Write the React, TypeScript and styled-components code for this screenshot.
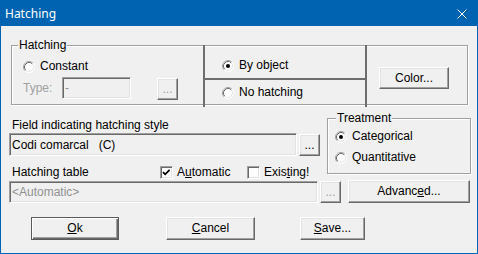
import React from "react";
import styled, { createGlobalStyle } from "styled-components";

const Global = createGlobalStyle`
  html, body { margin: 0; padding: 0; background: #f0f0f0; }
  body { font-family: "Liberation Sans", Arial, sans-serif; font-size: 12px; color: #000; }
  * { box-sizing: border-box; }
`;

const Window = styled.div`
  width: 478px;
  height: 254px;
  border: 1px solid #0063b1;
  background: #f0f0f0;
  display: flex;
  flex-direction: column;
  overflow: hidden;
`;

const TitleBar = styled.div`
  height: 25px;
  flex: none;
  background: #0063b1;
  color: #fff;
  display: flex;
  align-items: center;
  justify-content: space-between;
  padding: 0 10px 0 4px;
  font-family: "Noto Sans", "Open Sans", sans-serif;
  font-size: 12px;
`;

const Body = styled.div`
  flex: 1;
  display: flex;
  flex-direction: column;
`;

const GroupBox = styled.div<{ $w: number; $h: number }>`
  position: relative;
  flex: none;
  width: ${(p) => p.$w}px;
  height: ${(p) => p.$h}px;
  border: 1px solid #a0a0a0;
  box-shadow: 1px 1px 0 #fff, inset 1px 1px 0 #fff;
`;

const HatchingGroup = styled(GroupBox)`
  margin: 19px 0 0 10px;
  display: flex;
`;

const Legend = styled.span<{ $left: number }>`
  position: absolute;
  top: -8px;
  left: ${(p) => p.$left}px;
  padding: 0 1px;
  background: #f0f0f0;
  line-height: 15px;
  white-space: nowrap;
`;

const LeftPanel = styled.div`
  width: 191px;
  padding-left: 11px;
  display: flex;
  flex-direction: column;
`;

const OptionRow = styled.div<{ $mt?: number }>`
  display: flex;
  align-items: center;
  gap: 5px;
  height: 13px;
  line-height: 15px;
  white-space: nowrap;
  margin-top: ${(p) => p.$mt ?? 0}px;
`;

const TypeRow = styled.div`
  display: flex;
  align-items: flex-start;
  margin-top: 4px;
  height: 22px;
`;

const DimLabel = styled.span<{ $w: number }>`
  width: ${(p) => p.$w}px;
  color: #a0a0a0;
  line-height: 22px;
`;

const Field = styled.div<{ $w: number; $h: number; $dim?: boolean }>`
  flex: none;
  width: ${(p) => p.$w}px;
  height: ${(p) => p.$h}px;
  border: 1px solid;
  border-color: #a0a0a0 #fff #fff #a0a0a0;
  box-shadow: inset 1px 1px 0 #696969, inset -1px -1px 0 #e3e3e3;
  background: #f0f0f0;
  padding: 0 2px;
  display: flex;
  align-items: center;
  white-space: pre;
  color: ${(p) => (p.$dim ? "#909090" : "#000")};
`;

const Btn = styled.button<{ $w: number; $h: number; $ml?: number; $mt?: number; $def?: boolean; $dim?: boolean }>`
  flex: none;
  width: ${(p) => p.$w}px;
  height: ${(p) => p.$h}px;
  margin: ${(p) => p.$mt ?? 0}px 0 0 ${(p) => p.$ml ?? 0}px;
  padding: 0;
  font: inherit;
  display: flex;
  align-items: center;
  justify-content: center;
  background: #f0f0f0;
  color: ${(p) => (p.$dim ? "#a0a0a0" : "#000")};
  border: 1px solid;
  border-color: ${(p) => (p.$def ? "#5a5a5a" : "#fff #696969 #696969 #fff")};
  box-shadow: ${(p) =>
    p.$def
      ? "inset 1px 1px 0 #fff, inset -1px -1px 0 #696969, inset -2px -2px 0 #a0a0a0"
      : "inset -1px -1px 0 #a0a0a0, inset 1px 1px 0 #e3e3e3"};
  white-space: nowrap;
  line-height: 15px;
`;

const ModePanel = styled.div`
  flex: none;
  width: 164px;
  margin: -1px 0 -3px;
  border-left: 2px solid #6d6d6d;
  border-right: 2px solid #6d6d6d;
  display: flex;
  flex-direction: column;
`;

const ModeCell = styled.div<{ $pt: number; $top?: boolean }>`
  padding: ${(p) => p.$pt}px 0 0 17px;
  ${(p) => (p.$top ? "height: 35px; border-bottom: 2px solid #6d6d6d;" : "flex: 1;")}
`;

const RightPanel = styled.div`
  flex: 1;
  padding: 21px 0 0 12px;
`;

const MiddleRow = styled.div`
  display: flex;
  margin-left: 8px;
`;

const LeftCol = styled.div`
  width: 311px;
  display: flex;
  flex-direction: column;
`;

const TextLabel = styled.div<{ $mt: number }>`
  margin-top: ${(p) => p.$mt}px;
  padding-left: 3px;
  line-height: 15px;
  white-space: nowrap;
`;

const FieldRow = styled.div`
  display: flex;
  align-items: flex-start;
`;

const TableLabelRow = styled.div`
  display: flex;
  align-items: center;
  height: 16px;
  margin-top: 8px;
  padding-left: 3px;
  white-space: nowrap;
`;

const TableLabel = styled.span`
  width: 148px;
  line-height: 15px;
`;

const CheckItem = styled.label<{ $w?: number }>`
  display: flex;
  align-items: center;
  gap: 4px;
  ${(p) => (p.$w ? `width: ${p.$w}px;` : "")}
  line-height: 15px;
`;

const CheckBoxBox = styled.span`
  width: 13px;
  height: 13px;
  flex: none;
  display: block;
  background: #fff;
  border: 1px solid;
  border-color: #a0a0a0 #fff #fff #a0a0a0;
  box-shadow: inset 1px 1px 0 #696969, inset -1px -1px 0 #e3e3e3;
`;

const TreatmentGroup = styled(GroupBox)`
  margin: 13px 0 0 7px;
  padding-left: 7px;
  display: flex;
  flex-direction: column;
`;

const HatchRow = styled.div`
  display: flex;
  align-items: flex-start;
  margin: 1px 0 0 8px;
`;

const ButtonRow = styled.div`
  display: flex;
  margin: 14px 0 0 30px;
`;

const Radio = ({ checked }: { checked?: boolean }) => (
  <svg width="12" height="12" viewBox="0 0 12 12" style={{ flex: "none" }}>
    <circle cx="6" cy="6" r="5.5" fill="#fff" />
    <path d="M2.11 9.89 A5.5 5.5 0 0 1 9.89 2.11" fill="none" stroke="#a0a0a0" strokeWidth="1" />
    <path d="M9.89 2.11 A5.5 5.5 0 0 1 2.11 9.89" fill="none" stroke="#ffffff" strokeWidth="1" />
    <path d="M2.82 9.18 A4.5 4.5 0 0 1 9.18 2.82" fill="none" stroke="#696969" strokeWidth="1" />
    <path d="M9.18 2.82 A4.5 4.5 0 0 1 2.82 9.18" fill="none" stroke="#e3e3e3" strokeWidth="1" />
    {checked && <circle cx="6" cy="6" r="2" fill="#000" />}
  </svg>
);

const CheckBox = ({ checked }: { checked?: boolean }) => (
  <CheckBoxBox>
    {checked && (
      <svg width="11" height="11" viewBox="0 0 11 11" style={{ display: "block" }}>
        <path d="M2 5.2 L4.2 7.4 L8.6 2.8" fill="none" stroke="#000" strokeWidth="1.7" />
      </svg>
    )}
  </CheckBoxBox>
);

const CloseIcon = () => (
  <svg width="10" height="10" viewBox="0 0 10 10">
    <path d="M0.5 0.5 L9.5 9.5 M9.5 0.5 L0.5 9.5" stroke="#fff" strokeWidth="1" />
  </svg>
);

export default function App() {
  return (
    <>
      <Global />
      <Window>
        <TitleBar>
          <span>Hatching</span>
          <CloseIcon />
        </TitleBar>
        <Body>
          <HatchingGroup $w={457} $h={60}>
            <Legend $left={6}>Hatching</Legend>
            <LeftPanel>
              <OptionRow $mt={14}>
                <Radio />
                <span>Constant</span>
              </OptionRow>
              <TypeRow>
                <DimLabel $w={39}>Type:</DimLabel>
                <Field $w={69} $h={22} $dim>
                  -
                </Field>
                <Btn $w={21} $h={22} $ml={26} $mt={1} $dim>
                  ...
                </Btn>
              </TypeRow>
            </LeftPanel>
            <ModePanel>
              <ModeCell $pt={14} $top>
                <OptionRow>
                  <Radio checked />
                  <span>By object</span>
                </OptionRow>
              </ModeCell>
              <ModeCell $pt={6}>
                <OptionRow>
                  <Radio />
                  <span>No hatching</span>
                </OptionRow>
              </ModeCell>
            </ModePanel>
            <RightPanel>
              <Btn $w={70} $h={22}>
                Color...
              </Btn>
            </RightPanel>
          </HatchingGroup>

          <MiddleRow>
            <LeftCol>
              <TextLabel $mt={13}>Field indicating hatching style</TextLabel>
              <FieldRow>
                <Field $w={288} $h={23}>
                  {"Codi comarcal   (C)"}
                </Field>
                <Btn $w={21} $h={22} $ml={2} $mt={1}>
                  ...
                </Btn>
              </FieldRow>
              <TableLabelRow>
                <TableLabel>Hatching table</TableLabel>
                <CheckItem $w={87}>
                  <CheckBox checked />
                  <span>
                    A<u>u</u>tomatic
                  </span>
                </CheckItem>
                <CheckItem>
                  <CheckBox />
                  <span>
                    Exis<u>t</u>ing!
                  </span>
                </CheckItem>
              </TableLabelRow>
            </LeftCol>
            <TreatmentGroup $w={144} $h={56}>
              <Legend $left={8}>Treatment</Legend>
              <OptionRow $mt={11}>
                <Radio checked />
                <span>Categorical</span>
              </OptionRow>
              <OptionRow $mt={8}>
                <Radio />
                <span>Quantitative</span>
              </OptionRow>
            </TreatmentGroup>
          </MiddleRow>

          <HatchRow>
            <Field $w={309} $h={22} $dim>
              {"<Automatic>"}
            </Field>
            <Btn $w={21} $h={22} $ml={2} $dim>
              ...
            </Btn>
            <Btn $w={122} $h={23} $ml={7} $mt={-1}>
              <span>
                Advanc<u>e</u>d...
              </span>
            </Btn>
          </HatchRow>

          <ButtonRow>
            <Btn $w={88} $h={23} $def>
              <span>
                <u>O</u>k
              </span>
            </Btn>
            <Btn $w={89} $h={23} $ml={47}>
              <span>
                <u>C</u>ancel
              </span>
            </Btn>
            <Btn $w={65} $h={23} $ml={45}>
              <span>
                <u>S</u>ave...
              </span>
            </Btn>
          </ButtonRow>
        </Body>
      </Window>
    </>
  );
}
